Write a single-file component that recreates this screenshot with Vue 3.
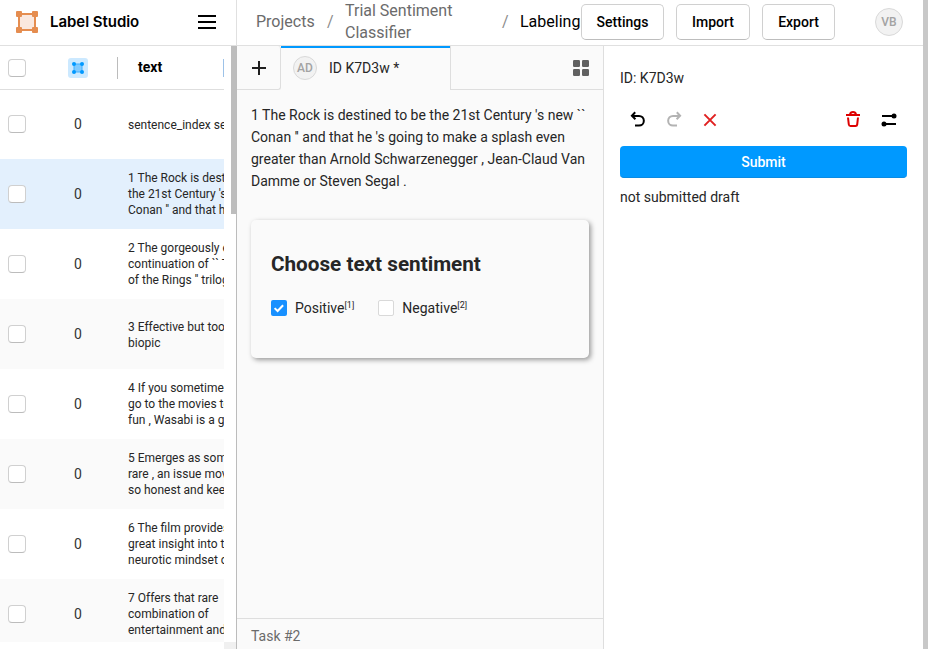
<script setup>
import { ref } from 'vue'

const rows = [
  { lines: ['sentence_index sentence'] },
  { lines: ['1 The Rock is destined to be', "the 21st Century 's new ``", "Conan '' and that he 's"], selected: true },
  { lines: ['2 The gorgeously elaborate', "continuation of `` The Lord", "of the Rings '' trilogy is"] },
  { lines: ['3 Effective but too-tepid', 'biopic'] },
  { lines: ['4 If you sometimes like to', 'go to the movies to have', 'fun , Wasabi is a good'] },
  { lines: ['5 Emerges as something', 'rare , an issue movie that', 'so honest and keenly'] },
  { lines: ['6 The film provides some', 'great insight into the', 'neurotic mindset of all'] },
  { lines: ['7 Offers that rare', 'combination of', 'entertainment and'] },
]
const choices = ref([
  { label: 'Positive', key: '[1]', checked: true },
  { label: 'Negative', key: '[2]', checked: false },
])
</script>

<template>
  <div class="page">
    <header class="topbar">
      <div class="brand">
        <svg class="logo" width="22" height="22" viewBox="0 0 22 22">
          <rect x="3" y="3" width="16" height="16" fill="#fae8df" stroke="#e58d50" stroke-width="2" />
          <g fill="#e58d50">
            <rect width="6" height="6" rx="1" /><rect x="16" width="6" height="6" rx="1" />
            <rect y="16" width="6" height="6" rx="1" /><rect x="16" y="16" width="6" height="6" rx="1" />
          </g>
        </svg>
        <span class="name">Label Studio</span>
        <span class="burger"><i /><i /><i /></span>
      </div>
      <nav class="crumbs">
        <span class="projects">Projects</span>
        <span class="slash">/</span>
        <span class="project">Trial Sentiment Classifier</span>
        <span class="slash">/</span>
        <span class="current">Labeling</span>
      </nav>
      <div class="actions">
        <button class="settings">Settings</button>
        <button class="import">Import</button>
        <button class="export">Export</button>
      </div>
      <span class="user">VB</span>
    </header>

    <div class="body">
      <aside class="table">
        <div class="grid">
          <div class="head">
            <span class="check" />
            <span class="region">
              <svg width="20" height="20" viewBox="0 0 20 20">
                <rect width="20" height="20" rx="3" fill="#cce9ff" />
                <rect x="6" y="6" width="8" height="8" fill="#80caff" stroke="#40b0ff" />
                <g fill="#0099ff">
                  <circle cx="6" cy="6" r="2" /><circle cx="14" cy="6" r="2" />
                  <circle cx="6" cy="14" r="2" /><circle cx="14" cy="14" r="2" />
                </g>
              </svg>
            </span>
            <span class="divider" />
            <span class="title">text</span>
            <span class="divider end" />
          </div>
          <div v-for="(row, i) in rows" :key="i" class="row" :class="{ selected: row.selected }">
            <span class="check" />
            <span class="count">0</span>
            <div class="cell" :class="{ short: row.lines.length < 3 }">
              <div v-for="line in row.lines" :key="line">{{ line }}</div>
            </div>
          </div>
        </div>
        <div class="scroll"><div class="thumb" /><div class="corner" /></div>
      </aside>

      <main class="editor">
        <div class="tabs">
          <div class="add">
            <svg width="14" height="14" viewBox="0 0 14 14"><path d="M7 0v14M0 7h14" stroke="#1f1f1f" stroke-width="2" /></svg>
          </div>
          <div class="tab"><span class="avatar">AD</span><span>ID K7D3w *</span></div>
          <div class="rest">
            <svg width="16" height="16" viewBox="0 0 16 16" fill="#616161">
              <rect width="7" height="7" rx="1.2" /><rect x="9" width="7" height="7" rx="1.2" />
              <rect y="9" width="7" height="7" rx="1.2" /><rect x="9" y="9" width="7" height="7" rx="1.2" />
            </svg>
          </div>
        </div>
        <div class="content">
          <div class="text">
            <div>1 The Rock is destined to be the 21st Century 's new ``</div>
            <div>Conan '' and that he 's going to make a splash even</div>
            <div>greater than Arnold Schwarzenegger , Jean-Claud Van</div>
            <div>Damme or Steven Segal .</div>
          </div>
          <section class="card">
            <h4>Choose text sentiment</h4>
            <div class="choices">
              <label v-for="c in choices" :key="c.label" @click="c.checked = !c.checked">
                <span class="box" :class="{ on: c.checked }">
                  <svg v-if="c.checked" width="16" height="16" viewBox="0 0 16 16">
                    <path d="M3.6 8.1l3 2.9 5.5-5.8" fill="none" stroke="#fff" stroke-width="2" />
                  </svg>
                </span>
                <span>{{ c.label }}<sup>{{ c.key }}</sup></span>
              </label>
            </div>
          </section>
        </div>
        <footer>Task #2</footer>
      </main>

      <aside class="panel">
        <div class="id">ID: K7D3w</div>
        <div class="tools">
          <svg width="18" height="18" viewBox="0 0 18 18" fill="none" stroke="#000" stroke-width="2">
            <path d="M6.2 1.3L2.9 4.8l3.5 3.5M3 4.9h7a4.7 4.7 0 0 1 0 9.7H6" />
          </svg>
          <svg width="18" height="18" viewBox="0 0 18 18" fill="none" stroke="#b3b3b3" stroke-width="2">
            <path d="M11.8 1.3l3.3 3.5-3.5 3.5M15 4.9H8a4.7 4.7 0 0 0 0 9.7h4" />
          </svg>
          <svg width="18" height="18" viewBox="0 0 18 18" fill="none" stroke="#e02020" stroke-width="2">
            <path d="M3.4 3.4l11.2 11.2M14.6 3.4L3.4 14.6" />
          </svg>
          <span class="space" />
          <svg width="18" height="18" viewBox="0 0 18 18" fill="none" stroke="#dd0000" stroke-width="2">
            <path d="M2 4h14M6 3.5Q6.5 1 9 1t3 2.500M4 6.500l.8 7q.2 1.500 1.700 1.500h5q1.500 0 1.700-1.500l.8-7" />
          </svg>
          <svg width="18" height="18" viewBox="0 0 18 18" fill="none" stroke="#000" stroke-width="2">
            <path d="M2 5h12M4 13h12" />
            <circle cx="14" cy="5" r="2.500" fill="#000" stroke="none" />
            <circle cx="4" cy="13" r="2.500" fill="#000" stroke="none" />
          </svg>
        </div>
        <button class="submit">Submit</button>
        <div class="draft">not submitted draft</div>
      </aside>
      <div class="edge" />
    </div>
  </div>
</template>

<style>
body { margin: 0; overflow: hidden; }
</style>

<style scoped>
* { box-sizing: border-box; }
.page { width: 928px; height: 649px; display: flex; flex-direction: column; overflow: hidden; background: linear-gradient(90deg, #fff 923px, #c8c8c8 923px); font: 14px/22px Roboto, sans-serif; color: #262626; }
svg { display: block; flex: none; }
button { font: 500 14px/22px Roboto, sans-serif; padding: 0; }
.topbar { width: 923px; height: 46px; flex: none; display: flex; align-items: flex-start; border-bottom: 1px solid #e0e0e0; background: #fff; }
.brand { width: 237px; height: 45px; flex: none; display: flex; align-items: center; padding: 0 20px 1px 16px; border-right: 1px solid #e0e0e0; }
.name { margin-left: 12px; font: 600 15px/20px Inter, sans-serif; letter-spacing: -0.04px; color: #000; white-space: nowrap; }
.burger { width: 18px; margin-left: auto; display: flex; flex-direction: column; gap: 4px; }
.burger i { height: 2px; background: #000; }
.crumbs { width: 344px; height: 44px; flex: none; display: flex; align-items: center; padding-left: 19px; font-size: 16px; color: #6b6b6b; }
.projects { width: 71px; }
.slash { width: 18px; color: #8c8c8c; }
.project { width: 157px; padding-right: 40px; }
.current { color: #000; }
.actions { display: flex; gap: 12px; padding-top: 4px; }
.actions button { height: 36px; background: #fff; border: 1px solid #d0d0d0; border-bottom-color: #bdbdbd; border-radius: 5px; color: #000; }
.settings { width: 83px; }
.import { width: 74px; }
.export { width: 73px; }
.user { width: 28px; height: 28px; margin: 8px 20px 0 auto; border: 1px solid #d9d9d9; border-radius: 50%; background: #f2f2f2; color: #a3a3a3; font: 500 12px/26px Roboto, sans-serif; text-align: center; }
.body { flex: 1; min-height: 0; display: flex; }
.table { width: 237px; flex: none; display: flex; border-right: 1px solid #bcbcbc; background: #fff; }
.grid { width: 224px; height: 596px; overflow: hidden; }
.head { height: 44px; display: flex; align-items: center; padding-left: 8px; border-bottom: 1px solid #dedede; }
.check { width: 18px; height: 18px; flex: none; background: #fff; border: 1px solid #d0d0d0; border-bottom-color: #bcbcbc; border-radius: 4px; }
.region { margin-left: 42px; }
.divider { width: 1px; height: 22px; flex: none; margin-left: 29px; background: #bcbcbc; }
.title { width: 85px; flex: none; margin-left: 20px; padding-bottom: 2px; font-weight: 700; color: #000; }
.divider.end { height: 18px; margin-left: 0; background: #9dc2e8; }
.row { height: 70px; display: flex; align-items: center; padding-left: 8px; background: #fff; }
.row:nth-child(2) { height: 69px; padding-bottom: 1px; }
.row:nth-child(5), .row:nth-child(7), .row:nth-child(9) { background: #fafafa; }
.row.selected { background: #e3f0fd; }
.count { width: 102px; flex: none; margin-left: 1px; text-align: center; color: #333; }
.cell { width: 140px; flex: none; margin-left: -1px; font-size: 12px; line-height: 16px; white-space: nowrap; }
.cell.short { padding-top: 2px; }
.scroll { width: 12px; display: flex; flex-direction: column; justify-content: space-between; align-items: flex-end; }
.thumb { width: 5px; height: 168px; background: #bdbdbd; }
.corner { width: 12px; height: 7px; background: #f0f0f0; }
.editor { width: 367px; flex: none; display: flex; flex-direction: column; background: #fafafa; border-right: 1px solid #dedede; }
.tabs { height: 44px; flex: none; display: flex; }
.add { width: 44px; display: flex; align-items: center; justify-content: center; border-right: 1px solid #dedede; border-bottom: 1px solid #dedede; border-radius: 0 3px 3px 0; }
.tab { width: 170px; display: flex; align-items: center; gap: 12px; padding-left: 12px; box-shadow: inset 0 2px #0099ff; border-right: 1px solid #dedede; }
.avatar { width: 24px; height: 24px; border: 1px solid #d9d9d9; border-radius: 50%; background: #f2f2f2; color: #a3a3a3; font: 500 12px/23px Roboto, sans-serif; text-align: center; }
.rest { flex: 1; display: flex; align-items: center; justify-content: flex-end; padding-right: 14px; border-bottom: 1px solid #dedede; }
.content { flex: 1; padding: 14px 14px 0; }
.text { white-space: nowrap; }
.card { height: 138px; margin-top: 28px; padding: 30px 20px; border-radius: 5px; box-shadow: 2px 2px 5px #999; background: #fafafa; }
h4 { margin: 0 0 16px; font-size: 20.7px; line-height: 28px; font-weight: 700; color: #262626; }
.choices { display: flex; gap: 24px; }
label { display: flex; align-items: center; gap: 8px; height: 28px; }
.box { width: 16px; height: 16px; border: 1px solid #d9d9d9; border-radius: 2px; background: #fff; }
.box.on { border: 0; background: #1890ff; }
sup { position: relative; top: -5px; font-size: 9px; line-height: 0; vertical-align: baseline; }
footer { height: 31px; padding: 6px 14px; border-top: 1px solid #dedede; color: #6b6b6b; }
.panel { width: 319px; padding: 21px 16px; background: #fff; }
.tools { display: flex; gap: 18px; margin-top: 22px; padding: 0 9px; }
.space { flex: 1; margin-right: -36px; }
.submit { width: 287px; height: 32px; margin-top: 17px; border: 0; border-bottom: 1px solid #0a8be3; border-radius: 4px; background: #0099ff; color: #fff; display: block; }
.draft { margin-top: 8px; }
.edge { width: 5px; background: #c8c8c8; }
</style>
